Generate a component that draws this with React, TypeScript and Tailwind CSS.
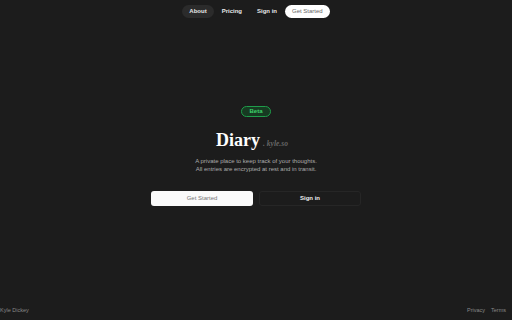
import React from "react";

const sans = { fontFamily: "'Liberation Sans', Arial, sans-serif" };
const serif = { fontFamily: "'Liberation Serif', serif" };

function Nav() {
  return (
    <nav className="flex items-center justify-center gap-[1px] pt-[5px]">
      <a className="flex h-[13px] items-center rounded-full bg-[#2b2b2b] px-[7px] text-[6px] font-bold text-[#e8e8e8]">
        About
      </a>
      <a className="flex h-[13px] items-center px-[7px] text-[6px] font-bold text-[#e8e8e8]">
        Pricing
      </a>
      <a className="flex h-[13px] items-center px-[7px] text-[6px] font-bold text-[#e8e8e8]">
        Sign in
      </a>
      <a className="flex h-[13px] items-center rounded-full bg-white px-[7px] text-[6px] text-[#666]">
        Get Started
      </a>
    </nav>
  );
}

export default function App() {
  return (
    <div
      className="flex h-screen w-full flex-col bg-[#1c1c1c] text-white"
      style={sans}
    >
      <Nav />
      <main className="flex flex-1 flex-col items-center pt-[88px]">
        <span className="flex h-[11px] items-center rounded-full border border-[#1f9d4a] bg-[#173a22] px-[7px] text-[6px] font-bold text-[#3ed26c]">
          Beta
        </span>
        <div className="mt-[12px] flex items-baseline pr-[8px]">
          <h1 className="text-[18px] font-bold leading-[22px] text-white" style={serif}>
            Diary
          </h1>
          <span className="ml-[3px] text-[7.5px] font-bold italic text-[#666]" style={serif}>
            . kyle.so
          </span>
        </div>
        <p className="mt-[6px] text-center text-[6px] leading-[8px] text-[#ababab]">
          A private place to keep track of your thoughts.
          <br />
          All entries are encrypted at rest and in transit.
        </p>
        <div className="mt-[18px] flex gap-[6px]">
          <button className="flex h-[15px] w-[102px] items-center justify-center rounded-[3px] bg-[#fafafa] text-[6px] text-[#777]">
            Get Started
          </button>
          <button className="flex h-[15px] w-[102px] items-center justify-center rounded-[3px] border border-[#262626] bg-[#1c1c1c] text-[6px] font-bold text-[#eee]">
            Sign in
          </button>
        </div>
      </main>
      <footer className="flex items-center justify-between pb-[6px] pr-[6px] text-[5.5px] text-[#888]">
        <span>Kyle Dickey</span>
        <div className="flex gap-[6px]">
          <a>Privacy</a>
          <a>Terms</a>
        </div>
      </footer>
    </div>
  );
}
